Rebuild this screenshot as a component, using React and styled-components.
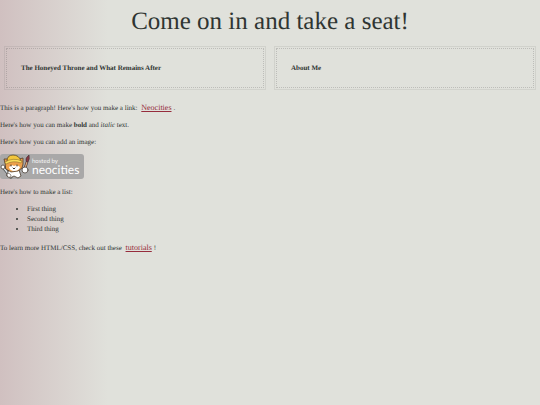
import React from "react";
import styled, { createGlobalStyle } from "styled-components";

const GlobalStyle = createGlobalStyle`
  body {
    margin: 0;
    min-height: 100vh;
    background: linear-gradient(to right, #d0c0c0, #e0e1db 20%);
    color: #2f3532;
    font-family: "Liberation Serif", "Times New Roman", serif;
    font-size: 7px;
    line-height: 10px;
    text-rendering: geometricPrecision;
  }
`;

const Title = styled.h1`
  margin: 0;
  padding-top: 7px;
  font-size: 25px;
  line-height: 29px;
  font-weight: 400;
  text-align: center;
`;

const Cards = styled.section`
  display: grid;
  grid-template-columns: 1fr 1fr;
  gap: 8px;
  padding: 10px 4px 13px;
`;

const Card = styled.article`
  border: 1px solid rgba(80, 80, 80, 0.1);
  padding: 1px;
`;

const CardInner = styled.div`
  border: 1px dotted rgba(80, 80, 80, 0.24);
  padding: 14px;
`;

const CardTitle = styled.h2`
  margin: 0;
  font-size: 7px;
  line-height: 10px;
  font-weight: 700;
`;

const Text = styled.p`
  margin: 0 0 7px;
`;

const TextLink = styled.a`
  margin: 0 2px;
  color: #962c3c;
  font-size: 8px;
`;

const List = styled.ul`
  margin: 0 0 9px;
  padding-left: 27px;
`;

const BadgeLink = styled.a`
  display: block;
  width: 85px;
  margin-bottom: 7px;
`;

const BadgeSvg = styled.svg`
  display: block;
  font-family: Lato, "Open Sans", sans-serif;
`;

function HostedBadge() {
  return (
    <BadgeSvg width="85" height="26" viewBox="0 0 85 26" role="img" aria-label="Hosted by Neocities">
      <rect x="0" y="0" width="84" height="25" rx="3" fill="#a9a8a8" />
      <g strokeLinejoin="round" strokeLinecap="round">
        <path d="M3 13 11 23" stroke="#4b4f50" strokeWidth="3" />
        <path d="M3 13 11 23" stroke="#dfe6ea" strokeWidth="1.5" />
        <path d="M9 16h10l2 6-3 2-4-2-4 2-3-2Z" fill="#fff" stroke="#4d3d30" strokeWidth=".8" />
        <path d="M5 9 4 5 8 5 19 5 23 4 23 10 22 14 18 17 11 18 6 15Z" fill="#eda04b" stroke="#513c2a" strokeWidth=".8" />
        <path d="M9 13q3-3 5-1q3-2 6 1q-1 4-6 4q-4 0-5-4Z" fill="#fff" />
        <path d="M7 7Q7 1 13 1q6 0 8 6Q14 5 7 8Z" fill="#f3c63d" stroke="#5d4726" strokeWidth=".8" />
        <path d="M5 8Q13 3 22 7l-1 2Q13 6 6 10Z" fill="#fadc5b" stroke="#7c6229" strokeWidth=".5" />
        <path d="M11 11v1M17 11v1M13 14l1 1 1-1" fill="none" stroke="#302621" />
        <path d="m25 14 2-6" stroke="#503b36" strokeWidth="2.5" />
        <path d="m25 14 2-6" stroke="#dfa878" strokeWidth="1.2" />
        <path d="M26 7Q25 4 29 1q1 4-1 7Z" fill="#8d3841" stroke="#48333a" strokeWidth=".7" />
        <circle cx="25" cy="16" r="3" fill="#fff" stroke="#4d443c" strokeWidth=".8" />
        <circle cx="3" cy="13" r="2" fill="#fff" stroke="#4d443c" strokeWidth=".8" />
        <path d="M7 20q2-2 4 1q0 3-3 2Z" fill="#fff" stroke="#4d443c" strokeWidth=".6" />
      </g>
      <text x="32" y="9" fontSize="6" fill="#f5f5f5">hosted by</text>
      <text x="32" y="20" fontSize="12" fill="#fff">neocities</text>
    </BadgeSvg>
  );
}

export default function App() {
  return (
    <>
      <GlobalStyle />
      <main>
        <Title>Come on in and take a seat!</Title>
        <Cards>
          {["The Honeyed Throne and What Remains After", "About Me"].map((title) => (
            <Card key={title}>
              <CardInner>
                <CardTitle>{title}</CardTitle>
              </CardInner>
            </Card>
          ))}
        </Cards>
        <Text>
          This is a paragraph! Here's how you make a link: <TextLink href="https://neocities.org">Neocities</TextLink>.
        </Text>
        <Text>
          Here's how you can make <strong>bold</strong> and <em>italic</em> text.
        </Text>
        <Text>Here's how you can add an image:</Text>
        <BadgeLink href="https://neocities.org">
          <HostedBadge />
        </BadgeLink>
        <Text>Here's how to make a list:</Text>
        <List>
          <li>First thing</li>
          <li>Second thing</li>
          <li>Third thing</li>
        </List>
        <Text>
          To learn more HTML/CSS, check out these <TextLink href="https://neocities.org/tutorials">tutorials</TextLink>!
        </Text>
      </main>
    </>
  );
}
